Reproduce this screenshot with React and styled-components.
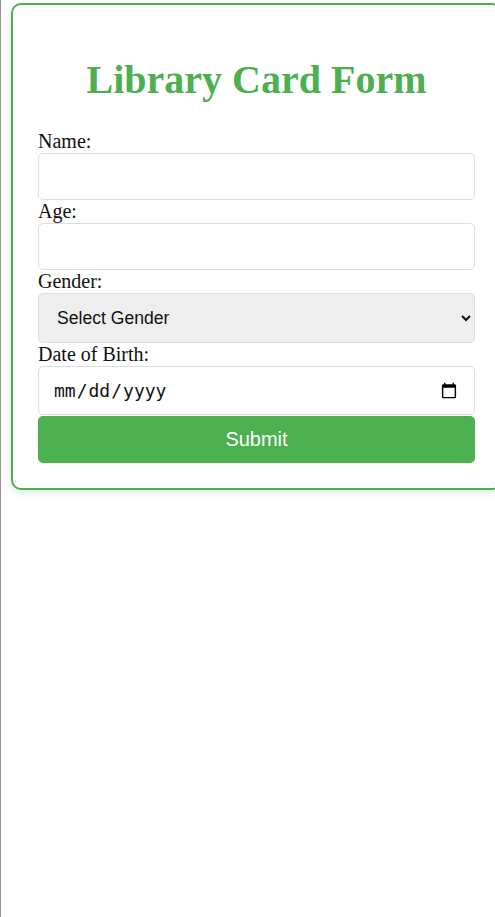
import React from 'react'
import styled, { createGlobalStyle } from 'styled-components'

const GlobalStyle = createGlobalStyle`
  html, body {
    margin: 0;
    padding: 0;
    background: #ffffff;
  }
  body {
    min-height: 100vh;
    border-left: 1px solid #9a8f94;
    font-family: "Liberation Serif", serif;
    overflow: hidden;
  }
`

const Card = styled.div`
  box-sizing: border-box;
  width: 491px;
  margin: 3px 0 0 10px;
  padding: 25px 25px 25px;
  border: 2px solid #4caf50;
  border-radius: 10px;
  background: #ffffff;
  box-shadow: 0 2px 8px rgba(0, 0, 0, 0.12);
`

const Title = styled.h1`
  margin: 26px 0 27px;
  text-align: center;
  color: #4caf50;
  font-family: "Liberation Serif", serif;
  font-size: 40px;
  font-weight: bold;
`

const Form = styled.form`
  display: flex;
  flex-direction: column;
`

const Label = styled.label`
  display: block;
  font-size: 20px;
  line-height: 23px;
  color: #111;
`

const Field = styled.input`
  box-sizing: border-box;
  width: 100%;
  height: ${p => p.$h || 47}px;
  padding: 0 14px;
  border: 1px solid #dddddd;
  border-radius: 5px;
  background: #ffffff;
  font-family: ${p => (p.$mono ? '"DejaVu Sans Mono", monospace' : '"Liberation Sans", Arial, sans-serif')};
  font-size: ${p => (p.$mono ? 18 : 17.6)}px;
  color: #111;
  outline: none;
`

const Select = styled.select`
  box-sizing: border-box;
  width: 100%;
  height: 50px;
  padding: 0 14px;
  border: 1px solid #dddddd;
  border-radius: 5px;
  background-color: #eeeeee;
  font-family: "Liberation Sans", Arial, sans-serif;
  font-size: 17.6px;
  color: #111;
  outline: none;
`

const Submit = styled.button`
  box-sizing: border-box;
  width: 100%;
  height: 47px;
  margin-top: 1px;
  border: none;
  border-radius: 5px;
  background: #4caf50;
  color: #ffffff;
  font-family: "Liberation Sans", Arial, sans-serif;
  font-size: 20px;
  cursor: pointer;
`

export default function App() {
  return (
    <>
      <GlobalStyle />
      <Card>
        <Title>Library Card Form</Title>
        <Form onSubmit={e => e.preventDefault()}>
          <Label htmlFor="name">Name:</Label>
          <Field id="name" type="text" />
          <Label htmlFor="age">Age:</Label>
          <Field id="age" type="number" />
          <Label htmlFor="gender">Gender:</Label>
          <Select id="gender" defaultValue="">
            <option value="">Select Gender</option>
            <option value="male">Male</option>
            <option value="female">Female</option>
            <option value="other">Other</option>
          </Select>
          <Label htmlFor="dob">Date of Birth:</Label>
          <Field id="dob" type="date" $mono $h={49} />
          <Submit type="submit">Submit</Submit>
        </Form>
      </Card>
    </>
  )
}
